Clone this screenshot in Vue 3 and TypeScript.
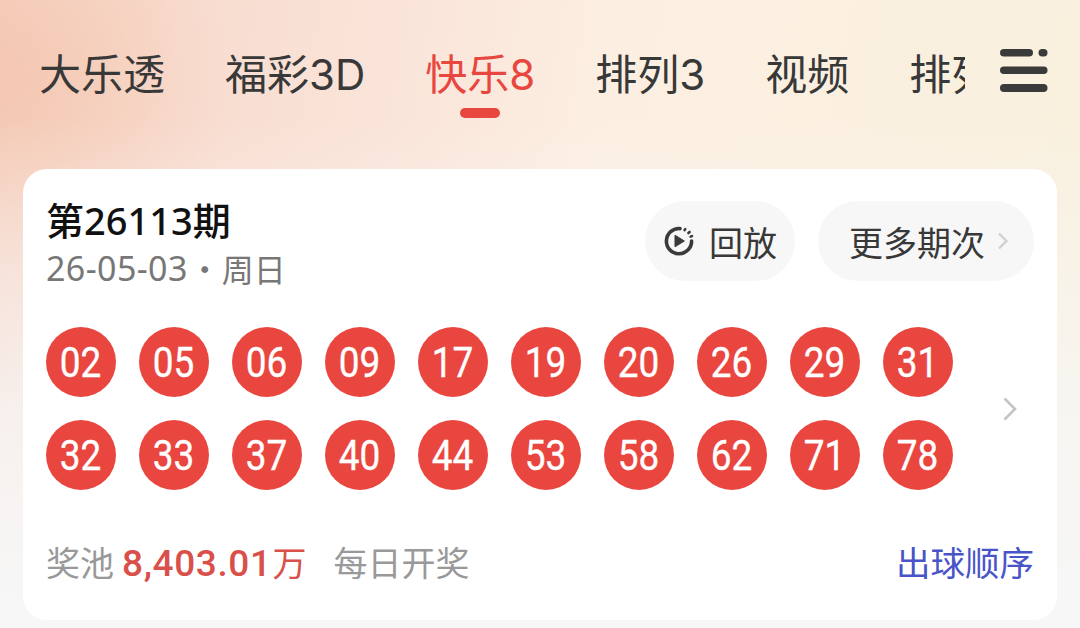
<script setup lang="ts">
interface Tab {
  key: string
  label: string
}

const tabs: Tab[] = [
  { key: 'dlt', label: '大乐透' },
  { key: 'fc3d', label: '福彩3D' },
  { key: 'kl8', label: '快乐8' },
  { key: 'pl3', label: '排列3' },
  { key: 'video', label: '视频' },
  { key: 'pl5', label: '排列5' }
]

const activeTab = 'kl8'

const balls: string[] = [
  '02', '05', '06', '09', '17', '19', '20', '26', '29', '31',
  '32', '33', '37', '40', '44', '53', '58', '62', '71', '78'
]
</script>

<template>
  <div class="page">
    <div class="top-bar">
      <div class="tabs">
        <div v-for="tab in tabs" :key="tab.key" :class="['tab-item', { active: activeTab === tab.key }]">
          <span class="tab-label">{{ tab.label }}</span>
          <i class="tab-line"></i>
        </div>
      </div>
      <svg class="menu-icon" width="48" height="46" viewBox="0 0 48 46">
        <g fill="#3a3a3a">
          <rect x="0" y="0" width="33" height="7.5" rx="3.75" />
          <rect x="38.5" y="0" width="9" height="7.5" rx="3.75" />
          <rect x="0" y="17.5" width="47.5" height="7.5" rx="3.75" />
          <rect x="0" y="35" width="47.5" height="8" rx="4" />
        </g>
      </svg>
    </div>

    <div class="card">
      <div class="card-header">
        <div class="issue">
          <div class="issue-title">第26113期</div>
          <div class="issue-date">
            <span class="date-num">26-05-03</span>
            <span class="date-sep">·</span>
            <span>周日</span>
          </div>
        </div>
        <div class="actions">
          <div class="pill replay">
            <svg width="32" height="32" viewBox="0 0 32 32">
              <path d="M17 3.6A12.6 12.6 0 1 0 28.6 16" fill="none" stroke="#3a3a3a" stroke-width="3.6" stroke-linecap="round" />
              <path d="M12 10.2 21.4 16 12 21.8Z" fill="#3a3a3a" stroke="#3a3a3a" stroke-width="1" stroke-linejoin="round" />
              <g stroke="#3a3a3a" stroke-width="2.6" stroke-linecap="round">
                <path d="M21.6 5.2 22.2 4.2" />
                <path d="M25.4 8 26.6 7" />
                <path d="M27.6 11.6 29 11.1" />
              </g>
            </svg>
            <span>回放</span>
          </div>
          <div class="pill more">
            <span>更多期次</span>
            <svg width="12" height="20" viewBox="0 0 12 20">
              <path d="M2 2.5 9.5 10 2 17.5" fill="none" stroke="#cfcfcf" stroke-width="2.2" />
            </svg>
          </div>
        </div>
      </div>

      <div class="balls-row">
        <div class="balls">
          <div v-for="n in balls" :key="n" class="ball"><span>{{ n }}</span></div>
        </div>
        <svg class="balls-arrow" width="16" height="26" viewBox="0 0 16 26">
          <path d="M2.5 2.5 13 13 2.5 23.5" fill="none" stroke="#c4c4c4" stroke-width="2.6" />
        </svg>
      </div>

      <div class="card-footer">
        <div class="pool">
          <span class="pool-label">奖池</span>
          <span class="pool-amount"><b>8,403.01</b>万</span>
          <span class="pool-note">每日开奖</span>
        </div>
        <span class="order-link">出球顺序</span>
      </div>
    </div>
  </div>
</template>

<style>
html,
body {
  margin: 0;
  background: #f7f7f7;
}
</style>

<style scoped>
.page {
  width: 1080px;
  height: 628px;
  overflow: hidden;
  font-family: "Noto Sans CJK SC", "Noto Sans", sans-serif;
  background:
    linear-gradient(180deg, rgba(247, 247, 247, 0) 0, rgba(247, 247, 247, 0) 120px, rgba(247, 247, 247, 0.45) 290px, rgba(247, 247, 247, 0.8) 420px, #f7f7f7 600px),
    radial-gradient(ellipse 240px 190px at 0 80px, rgba(242, 190, 164, 0.55), rgba(242, 190, 164, 0)),
    linear-gradient(100deg, #f6d2c1 0, #f8dccf 180px, #fae4d9 400px, #fcefe2 620px, #f9f0de 1080px);
}

.top-bar {
  display: flex;
  height: 169px;
}

.tabs {
  display: flex;
  gap: 60px;
  width: 926px;
  margin-left: 39px;
  overflow: hidden;
}

.tab-item {
  flex: none;
  display: flex;
  flex-direction: column;
  align-items: center;
  padding-top: 45px;
  color: #383838;
}

.tab-label {
  font-family: Inter, "Noto Sans CJK SC", sans-serif;
  font-size: 42px;
  line-height: 60px;
}

.tab-line {
  width: 40px;
  height: 10px;
  margin-top: 3px;
  border-radius: 5px;
}

.tab-item.active {
  color: #e8473f;
}

.tab-item.active .tab-line {
  background: #e8473f;
}

.menu-icon {
  margin: 49px 0 0 35px;
}

.card {
  margin: 0 23px;
  height: 451px;
  box-sizing: border-box;
  padding: 32px 23px 0;
  background: #fff;
  border-radius: 24px;
}

.card-header {
  display: flex;
  justify-content: space-between;
  height: 80px;
}

.issue-title {
  margin-top: -6px;
  font-family: "Noto Sans", "Noto Sans CJK SC", sans-serif;
  font-size: 38px;
  line-height: 50px;
  font-weight: 500;
  color: #111;
}

.issue-date {
  display: flex;
  align-items: center;
  height: 44px;
  margin-top: 1px;
  font-size: 32px;
  color: #777;
}

.date-num {
  font-family: "Noto Sans", sans-serif;
  font-size: 34px;
  letter-spacing: 0.4px;
}

.date-sep {
  width: 34px;
  text-align: center;
}

.actions {
  display: flex;
  gap: 23px;
}

.pill {
  display: flex;
  align-items: center;
  height: 80px;
  border-radius: 40px;
  background: #f7f7f7;
  font-size: 34px;
  color: #383838;
}

.replay {
  gap: 14px;
  padding: 0 18px;
}

.more {
  gap: 12px;
  padding: 0 25px 0 31px;
}

.balls-row {
  display: flex;
  align-items: center;
  margin-top: 46px;
}

.balls {
  display: grid;
  grid-template-columns: repeat(10, 70px);
  gap: 23px;
}

.ball {
  display: flex;
  align-items: center;
  justify-content: center;
  width: 70px;
  height: 70px;
  border-radius: 50%;
  background: #e9463f;
  color: #fff;
  font-family: Roboto, "Liberation Sans", sans-serif;
  font-size: 42px;
  -webkit-text-stroke: 0.35px #fff;
}

.ball span {
  transform: scaleX(0.88);
}

.balls-arrow {
  margin-left: 49px;
}

.card-footer {
  display: flex;
  justify-content: space-between;
  align-items: center;
  height: 50px;
  margin-top: 46px;
  font-size: 34px;
}

.pool {
  display: flex;
  align-items: center;
}

.pool-label,
.pool-note {
  color: #999;
}

.pool-amount {
  margin-left: 8px;
  color: #d9504a;
}

.pool-amount b {
  margin-right: 1px;
  font-family: Roboto, "Liberation Sans", sans-serif;
  font-size: 37px;
  font-weight: 500;
  letter-spacing: 0.6px;
}

.pool-note {
  margin-left: 27px;
}

.order-link {
  color: #4a54c9;
  font-size: 34.5px;
}
</style>
